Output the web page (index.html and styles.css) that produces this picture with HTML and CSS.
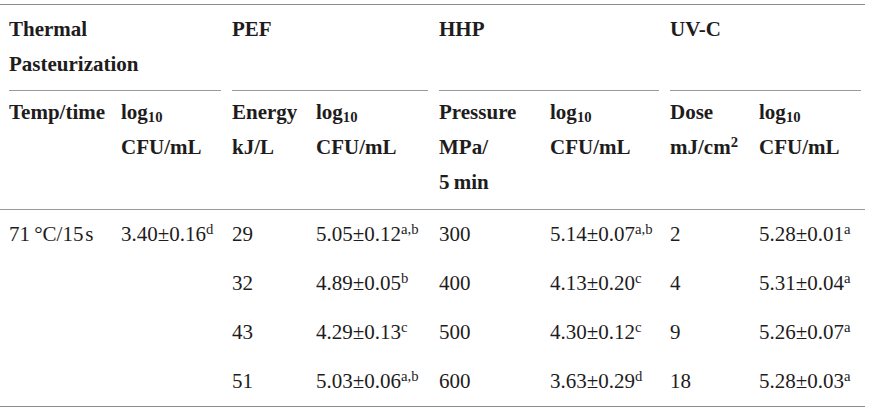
FILE: index.html
```html
<!DOCTYPE html>
<html lang="en">
<head>
<meta charset="utf-8">
<title>Table</title>
<link rel="stylesheet" href="styles.css">
</head>
<body>
<div class="wrap">
<table class="tbl">
<colgroup>
<col class="c1"><col class="c2"><col class="c3"><col class="c4"><col class="c5"><col class="c6"><col class="c7"><col class="c8">
</colgroup>
<thead>
<tr class="grp">
<th colspan="2" class="first"><div class="gl gl1">Thermal<br>Pasteurization</div></th>
<th colspan="2"><div class="gl gl2">PEF</div></th>
<th colspan="2"><div class="gl gl3">HHP</div></th>
<th colspan="2"><div class="gl gl4">UV-C</div></th>
</tr>
<tr class="sub">
<th class="first">Temp/time</th>
<th>log<sub>10</sub><br>CFU/mL</th>
<th>Energy<br>kJ/L</th>
<th>log<sub>10</sub><br>CFU/mL</th>
<th>Pressure<br>MPa/<br>5&#8201;min</th>
<th>log<sub>10</sub><br>CFU/mL</th>
<th>Dose<br>mJ/cm<sup>2</sup></th>
<th>log<sub>10</sub><br>CFU/mL</th>
</tr>
</thead>
<tbody>
<tr>
<td class="first">71&#8201;°C/15&#8202;s</td>
<td>3.40±0.16<sup>d</sup></td>
<td>29</td>
<td>5.05±0.12<sup>a,b</sup></td>
<td>300</td>
<td>5.14±0.07<sup>a,b</sup></td>
<td>2</td>
<td>5.28±0.01<sup>a</sup></td>
</tr>
<tr>
<td class="first"></td>
<td></td>
<td>32</td>
<td>4.89±0.05<sup>b</sup></td>
<td>400</td>
<td>4.13±0.20<sup>c</sup></td>
<td>4</td>
<td>5.31±0.04<sup>a</sup></td>
</tr>
<tr>
<td class="first"></td>
<td></td>
<td>43</td>
<td>4.29±0.13<sup>c</sup></td>
<td>500</td>
<td>4.30±0.12<sup>c</sup></td>
<td>9</td>
<td>5.26±0.07<sup>a</sup></td>
</tr>
<tr>
<td class="first"></td>
<td></td>
<td>51</td>
<td>5.03±0.06<sup>a,b</sup></td>
<td>600</td>
<td>3.63±0.29<sup>d</sup></td>
<td>18</td>
<td>5.28±0.03<sup>a</sup></td>
</tr>
</tbody>
</table>
</div>
</body>
</html>
```
FILE: styles.css
```css
html, body {
  margin: 0;
  padding: 0;
  background: #ffffff;
}

body {
  font-family: "Liberation Serif", "Times New Roman", serif;
  font-size: 21px;
  line-height: 35px;
  color: #1e1c1c;
}

.wrap {
  padding-top: 4px;
}

.tbl {
  width: 865px;
  table-layout: fixed;
  border-collapse: separate;
  border-spacing: 0;
  border-top: 1px solid #8c8c8c;
  border-bottom: 1px solid #8c8c8c;
}

.c1 { width: 121px; }
.c2 { width: 111px; }
.c3 { width: 84px; }
.c4 { width: 123px; }
.c5 { width: 111px; }
.c6 { width: 120px; }
.c7 { width: 89px; }
.c8 { width: 106px; }

.tbl th,
.tbl td {
  padding: 0;
  text-align: left;
  vertical-align: top;
  white-space: nowrap;
}

.tbl th {
  font-weight: bold;
}

.tbl .first {
  padding-left: 9px;
}

.grp th {
  padding-top: 7px;
}

.gl {
  min-height: 70px;
  padding-bottom: 8px;
  border-bottom: 1px solid #9a9a9a;
}

.gl1, .gl2, .gl3 { margin-right: 11px; }
.gl4 { margin-right: 4px; }

.sub th {
  padding-top: 4px;
  padding-bottom: 9px;
  border-bottom: 1px solid #9a9a9a;
}

.tbl td {
  padding-top: 7px;
  padding-bottom: 7px;
}

sup, sub {
  font-size: 70%;
  line-height: 0;
}

sup {
  vertical-align: 0.5em;
}

sub {
  vertical-align: -0.2em;
}
```
